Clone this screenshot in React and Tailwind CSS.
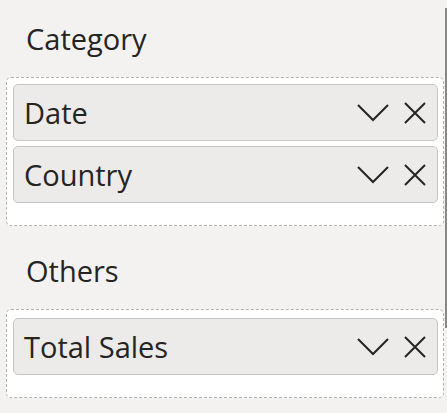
import React from 'react';

const Chevron = () => (
  <svg width="32" height="18" viewBox="0 0 32 18" fill="none" stroke="#252423" strokeWidth="2">
    <path d="M1 1 L16 16 L31 1" />
  </svg>
);

const Close = () => (
  <svg width="22" height="22" viewBox="0 0 22 22" fill="none" stroke="#252423" strokeWidth="2">
    <path d="M1 1 L21 21 M21 1 L1 21" />
  </svg>
);

const FieldPill = ({ label }) => (
  <div className="h-[57px] flex items-center justify-between pl-[10px] pr-[11px] bg-[#edebe9] border border-[#c8c6c4] rounded-[5px]">
    <span className="text-[29px] text-[#252423]">{label}</span>
    <div className="flex items-center gap-[15px]">
      <Chevron />
      <Close />
    </div>
  </div>
);

const Well = ({ title, fields, top }) => (
  <div>
    <div className="pl-[20px] h-[36px] leading-[36px] text-[29px] text-[#252423]">{title}</div>
    <div className={`mt-[20px] bg-white border border-dashed border-[#b3b0ad] rounded-[5px] pl-[6px] pr-[5px] pb-[22px] flex flex-col gap-[5px] ${top}`}>
      {fields.map((f) => (
        <FieldPill key={f} label={f} />
      ))}
    </div>
  </div>
);

const App = () => {
  return (
    <div
      className="relative w-[447px] h-[413px] bg-[#f3f2f1] overflow-hidden"
      style={{ fontFamily: '"Open Sans", "Noto Sans", sans-serif' }}
    >
      <div className="pt-[21px] pl-[6px] pr-[3px] flex flex-col gap-[27px]">
        <Well title="Category" fields={['Date', 'Country']} top="pt-[6px]" />
        <Well title="Others" fields={['Total Sales']} top="pt-[8px]" />
      </div>
      {/* scrollbar */}
      <div className="absolute right-0 top-[8px] w-[2px] h-[320px] bg-[#8a8886]" />
    </div>
  );
};

export default App;
